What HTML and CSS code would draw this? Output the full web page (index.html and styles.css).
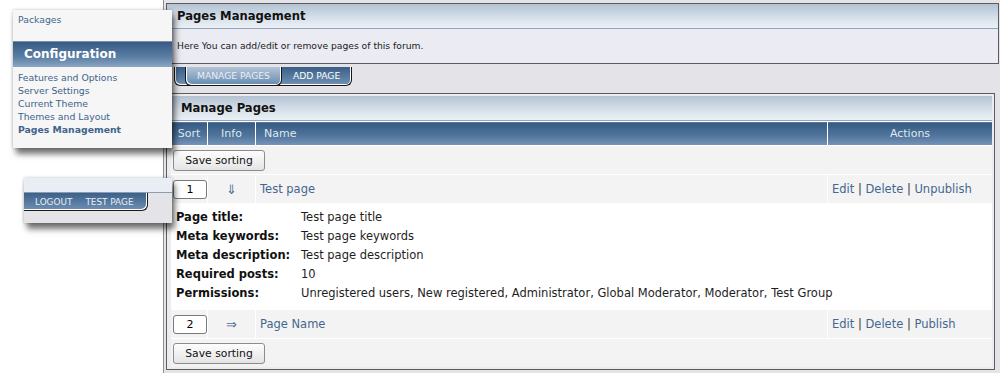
FILE: index.html
```html
<!DOCTYPE html>
<html lang="en">
<head>
    <meta charset="UTF-8">
    <meta name="viewport" content="width=device-width, initial-scale=1.0">
    <title>Pages Management</title>
    <link rel="stylesheet" href="styles.css">
</head>
<body>
    <div class="page">
        <aside class="sidebar">
            <div class="side-panel menu">
                <div class="side-top"><a href="#">Packages</a></div>
                <h2 class="side-title">Configuration</h2>
                <ul class="side-list">
                    <li><a href="#">Features and Options</a></li>
                    <li><a href="#">Server Settings</a></li>
                    <li><a href="#">Current Theme</a></li>
                    <li><a href="#">Themes and Layout</a></li>
                    <li><a class="current" href="#">Pages Management</a></li>
                </ul>
            </div>

            <div class="side-panel user-panel">
                <div class="user-strip"></div>
                <div class="user-tabs">
                    <a href="#">LOGOUT</a>
                    <a href="#">TEST PAGE</a>
                </div>
            </div>
        </aside>

        <main class="main">
            <section class="box intro">
                <h1 class="box-title">Pages Management</h1>
                <p class="box-text">Here You can add/edit or remove pages of this forum.</p>
            </section>

            <div class="tabs">
                <a class="tab active" href="#">MANAGE PAGES</a>
                <a class="tab" href="#">ADD PAGE</a>
            </div>

            <section class="box list">
                <h2 class="box-title">Manage Pages</h2>
                <table class="pages-table">
                    <thead>
                        <tr>
                            <th class="col-sort">Sort</th>
                            <th class="col-info">Info</th>
                            <th class="col-name">Name</th>
                            <th class="col-actions">Actions</th>
                        </tr>
                    </thead>
                    <tbody>
                        <tr class="save-row">
                            <td colspan="4"><button class="btn">Save sorting</button></td>
                        </tr>
                        <tr class="page-row">
                            <td class="col-sort"><input class="sort-input" type="text" value="1"></td>
                            <td class="col-info"><a class="arrow" href="#">&#8659;</a></td>
                            <td class="col-name"><a href="#">Test page</a></td>
                            <td class="col-actions"><a href="#">Edit</a> | <a href="#">Delete</a> | <a href="#">Unpublish</a></td>
                        </tr>
                        <tr class="details-row">
                            <td colspan="4">
                                <dl class="details">
                                    <dt>Page title:</dt><dd>Test page title</dd>
                                    <dt>Meta keywords:</dt><dd>Test page keywords</dd>
                                    <dt>Meta description:</dt><dd>Test page description</dd>
                                    <dt>Required posts:</dt><dd>10</dd>
                                    <dt>Permissions:</dt><dd>Unregistered users, New registered, Administrator, Global Moderator, Moderator, Test Group</dd>
                                </dl>
                            </td>
                        </tr>
                        <tr class="page-row">
                            <td class="col-sort"><input class="sort-input" type="text" value="2"></td>
                            <td class="col-info"><a class="arrow" href="#">&#8658;</a></td>
                            <td class="col-name"><a href="#">Page Name</a></td>
                            <td class="col-actions"><a href="#">Edit</a> | <a href="#">Delete</a> | <a href="#">Publish</a></td>
                        </tr>
                        <tr class="save-row">
                            <td colspan="4"><button class="btn">Save sorting</button></td>
                        </tr>
                    </tbody>
                </table>
            </section>
        </main>
    </div>
</body>
</html>
```

FILE: styles.css
```css
body {
    margin: 0;
    background: #fff;
    font-family: "DejaVu Sans", Verdana, sans-serif;
    color: #1a1a1a;
    overflow: hidden;
}
a {
    color: #44678f;
    text-decoration: none;
}
.page {
    display: flex;
    min-height: 100vh;
}

/* sidebar panels */
.sidebar {
    flex: 0 0 163px;
    min-width: 0;
    position: relative;
    z-index: 2;
}
.side-panel {
    background: #f6f6f6;
    box-shadow: 3px 6px 6px rgba(0,0,0,0.55), 0 0 3px rgba(0,0,0,0.25);
}
.menu {
    width: 159px;
    margin: 10px 0 0 13px;
    padding-bottom: 12px;
}
.side-top {
    height: 28px;
    padding: 3px 0 0 5px;
    font-size: 9.3px;
    line-height: 13px;
    border-bottom: 1px solid #7d8d9f;
}
.side-title {
    margin: 0;
    height: 25px;
    padding-left: 11px;
    font-size: 12px;
    line-height: 25px;
    color: #fff;
    background: linear-gradient(#365b84, #5b7ea4 60%, #8aa6c3);
}
.side-list {
    list-style: none;
    margin: 4px 0 0;
    padding: 0 0 0 5px;
    font-size: 9.3px;
    line-height: 13px;
}
.side-list a {
    color: #41638b;
}
.side-list .current {
    font-weight: bold;
}
.user-panel {
    width: 148px;
    margin: 30px 0 0 24px;
    background: #e4e4e8;
    height: 45px;
}
.user-strip {
    height: 14px;
    background: #e9eef4;
    border-bottom: 1px solid #8a9cb0;
}
.user-tabs {
    width: 124px;
    height: 18px;
    display: flex;
    gap: 13px;
    padding-left: 11px;
    box-sizing: border-box;
    font-size: 8.9px;
    line-height: 18px;
    background: linear-gradient(#3b608a, #7090b3);
    border: 1px solid #1b1b1b;
    border-width: 0 1px 1px 0;
    border-radius: 0 0 6px 0;
    box-shadow: inset -1px -1px 0 #fff;
}
.user-tabs a {
    color: #e8eef5;
}

/* main area */
.main {
    flex: 1;
    background: #e4e3e8;
    border-left: 1px solid #8f8f93;
    padding: 3px 0 0 2px;
}
.box {
    border: 1px solid #5d5d5f;
}
.box-title {
    margin: 0;
    height: 24px;
    padding-left: 10px;
    font-size: 11.6px;
    line-height: 25px;
    color: #111;
    background: linear-gradient(#b3c2d2, #d5dfe9 55%, #ebf0f6);
    border-bottom: 1px solid #93a4b6;
}
.intro {
    margin-right: 1px;
    background: #ebebf3;
}
.box-text {
    margin: 0;
    height: 34px;
    padding-left: 10px;
    font-size: 9.2px;
    line-height: 33px;
}
.tabs {
    display: inline-flex;
    margin: 0 0 7px 8px;
    height: 18px;
    padding-left: 10px;
    background: linear-gradient(#3a5f88, #7191b4);
    border: 1px solid #161616;
    border-top: 0;
    border-radius: 0 0 6px 6px;
    box-shadow: inset 1px -1px 0 #fff, inset -1px 0 0 #fff;
}
.tab {
    padding: 0 11px;
    font-size: 9.2px;
    line-height: 18px;
    color: #fff;
}
.tab.active {
    color: #e9eef4;
    background: linear-gradient(#b2c3d5, #86a3c2 60%, #6488ad);
    border: 1px solid #161616;
    border-top: 0;
    border-radius: 0 0 6px 6px;
    box-shadow: inset 1px -1px 0 #fff, inset -1px 0 0 #fff;
    margin-bottom: -1px;
}
.list {
    margin-right: 5px;
    padding: 2px 2px 2px 4px;
    background: #ececec;
}

/* table */
.pages-table {
    width: 100%;
    border-collapse: collapse;
    font-size: 11.5px;
}
.pages-table th {
    height: 23px;
    padding: 0;
    font-size: 11px;
    font-weight: normal;
    color: #dfe7ef;
    background: linear-gradient(#355a83, #4f739b 55%, #7595b7);
    border-left: 1px solid #fff;
    border-top: 1px solid #fff;
}
.pages-table th:first-child {
    border-left: 0;
}
.col-sort {
    width: 33px;
}
.col-info {
    width: 47px;
    text-align: center;
}
.pages-table th.col-name {
    text-align: left;
    padding-left: 8px;
}
.col-actions {
    width: 160px;
}
.pages-table td {
    background: #f3f3f3;
    border-top: 1px solid #fff;
    padding: 0;
}
.page-row td {
    height: 28px;
    border-left: 1px solid #fff;
}
.page-row td:first-child {
    border-left: 0;
}
.page-row .col-sort {
    padding-left: 2px;
}
.page-row .col-name,
.page-row .col-actions {
    padding-left: 4px;
    color: #333;
}
.arrow {
    font-size: 13px;
    color: #4a6e96;
}
.save-row td {
    height: 28px;
    padding-left: 2px;
}
.btn {
    height: 21px;
    width: 92px;
    padding: 0;
    font-family: "DejaVu Sans", Verdana, sans-serif;
    font-size: 10.8px;
    color: #111;
    background: linear-gradient(#fdfdfd, #e4e4e4);
    border: 1px solid #8c8c8c;
    border-radius: 3px;
}
.sort-input {
    width: 34px;
    height: 19px;
    box-sizing: border-box;
    padding: 0;
    text-align: center;
    font-family: "DejaVu Sans", Verdana, sans-serif;
    font-size: 11px;
    border: 1px solid #7a7a7a;
    border-radius: 3px;
    background: #fff;
    vertical-align: middle;
}
.details-row td {
    background: #fff;
    padding: 4px 3px 6px 5px;
}
.details {
    display: grid;
    grid-template-columns: 125px 1fr;
    margin: 0;
    line-height: 19px;
}
.details dt {
    font-weight: bold;
    color: #111;
}
.details dd {
    margin: 0;
    color: #1e1e1e;
}
```
